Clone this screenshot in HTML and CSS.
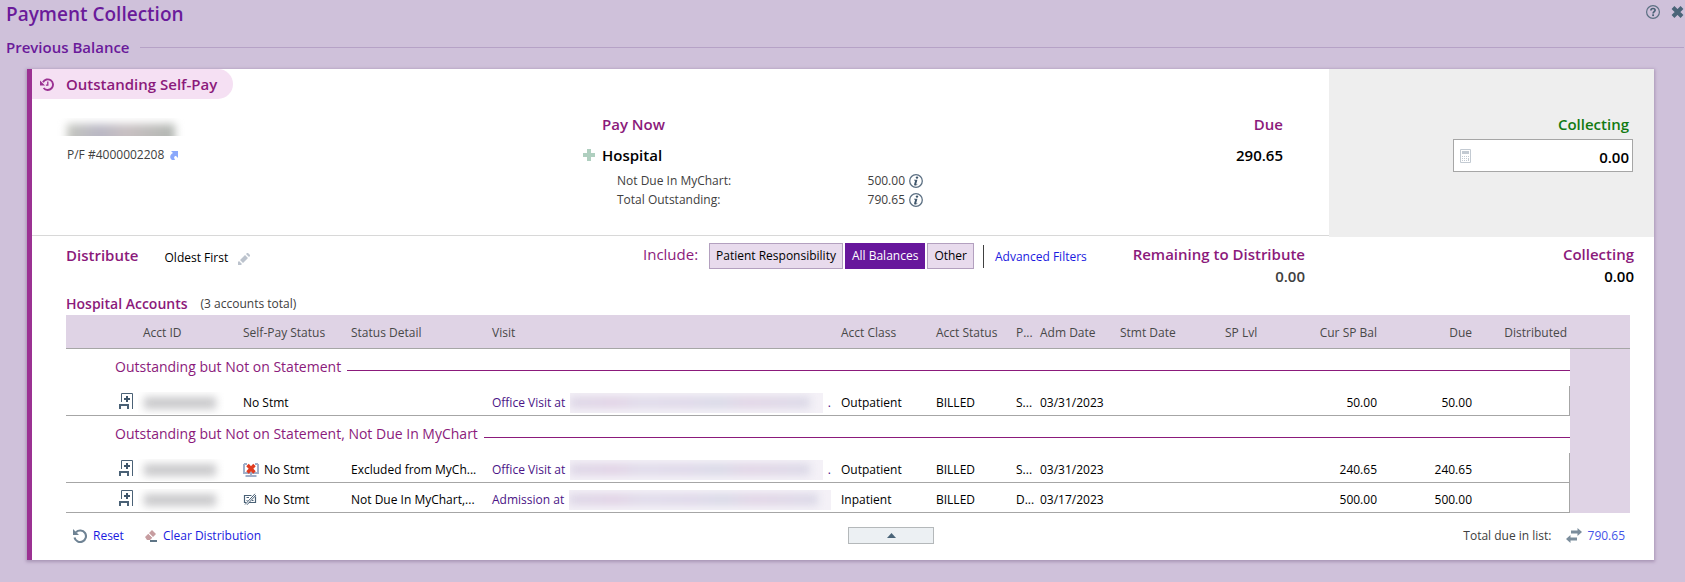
FILE: index.html
```html
<!DOCTYPE html>
<html lang="en">
<head>
<meta charset="utf-8">
<title>Payment Collection</title>
<link rel="stylesheet" href="styles.css">
</head>
<body>
<svg class="sprite" aria-hidden="true">
  <symbol id="info" viewBox="0 0 14 14"><circle cx="7" cy="7" r="6.3" fill="#fff" stroke="#5c7083" stroke-width="1.3"/><circle cx="8" cy="3.6" r="1.2" fill="#3f566b"/><path d="M5 5.8h3.4L7.2 10.2c0 .5.6.3 1.5-.4-.4 1.2-1.4 1.8-2.4 1.8-.9 0-1.4-.5-1.1-1.5L6.200 6.600H5z" fill="#3f566b"/></symbol>
  <symbol id="building" viewBox="0 0 14 16"><path d="M2.500 9V.5h11V16" fill="none" stroke="#4a6176"/><path d="M0 12h10M1 13v3M9 11v5" fill="none" stroke="#4a6176" stroke-width="2"/><path d="M5 6h6M8 3v6" stroke="#3f566b" stroke-width="2"/></symbol>
</svg>
<header class="titlebar">
  <h1>Payment Collection</h1>
  <div class="window-actions">
    <button type="button" aria-label="Help"><svg width="14" height="14" viewBox="0 0 14 14"><circle cx="7" cy="7" r="6.4" fill="none" stroke="#5c7083" stroke-width="1.2"/><path d="M4.900 5.600C4.900 2.800 9.200 2.900 9.100 5.200 9 6.600 7.100 6.700 7.100 8.500" fill="none" stroke="#4a6176" stroke-width="1.700"/><rect x="6.200" y="9.300" width="1.800" height="1.800" fill="#4a6176"/></svg></button>
    <button type="button" aria-label="Close"><svg width="13" height="12" viewBox="0 0 13 12"><path d="M2 1.500 11 10.500M11 1.500 2 10.500" stroke="#4a6478" stroke-width="4"/></svg></button>
  </div>
</header>
<h2 class="section-title">Previous Balance</h2>

<main class="card">
  <section class="summary">
    <div class="summary-main">
      <h3 class="pill"><svg width="14" height="13" viewBox="0 0 14 13"><path d="M3 4.200A5.300 5.300 0 1 1 3.600 10" fill="none" stroke="#9b3192" stroke-width="1.900"/><path d="M0 2.500v5h5z" fill="#9b3192"/><path d="M7.800 3.500v3.700H5.900" fill="none" stroke="#9b3192" stroke-width="1.300"/></svg>Outstanding Self-Pay</h3>
      <div class="summary-grid">
        <div class="patient">
          <div class="redacted redacted-name"></div>
          <p>P/F #4000002208 <svg width="8" height="9" viewBox="0 0 8 9"><path d="M1 0h7v7L6 5C4 5 3.500 6.500 5 9H2C-1 7 0 3.500 3 2z" fill="#8aa8fb"/></svg></p>
        </div>
        <div class="pay-now">
          <h4>Pay Now</h4>
          <div class="payer"><svg width="12" height="12" viewBox="0 0 12 12"><path d="M4 0h4v4h4v4H8v4H4V8H0V4h4z" fill="#afcfbf"/></svg>Hospital</div>
          <dl>
            <dt>Not Due In MyChart:</dt><dd>500.00 <svg width="14" height="14"><use href="#info"/></svg></dd>
            <dt>Total Outstanding:</dt><dd>790.65 <svg width="14" height="14"><use href="#info"/></svg></dd>
          </dl>
        </div>
        <div class="due"><h4>Due</h4><div class="payer">290.65</div></div>
      </div>
    </div>
    <div class="summary-side">
      <label for="collecting">Collecting</label>
      <div class="amount-box">
        <svg width="11" height="14" viewBox="0 0 11 14"><path d="M.5.5h10v13H.5z" fill="#fff" stroke="#c3cad2"/><path d="M2 2h7v3H2z" fill="#c3cad2"/><path d="M2 7.500h5M2 9.500h5M2 11.500h5" stroke="#c3cad2" stroke-dasharray="1 1"/><path d="M8.500 7v1M8.500 9v3" stroke="#c3cad2"/></svg>
        <input id="collecting" type="text" value="0.00">
      </div>
    </div>
  </section>

  <section class="distribute">
    <div class="method"><h4>Distribute</h4><span>Oldest First</span>
      <button type="button" aria-label="Edit distribution"><svg width="12" height="12" viewBox="0 0 12 12"><path d="M0 12V9l1-1 3 3-1 1zM2 7 7 2l3 3-5 5zM8 1l1-1h1l2 2v1l-1 1z" fill="#bcc3cd"/></svg></button>
    </div>
    <div class="include">
      <span class="include-label">Include:</span>
      <div class="segments"><button type="button">Patient Responsibility</button><button type="button" class="active">All Balances</button><button type="button">Other</button></div>
      <a href="#filters">Advanced Filters</a>
    </div>
    <div class="figure remaining"><h4>Remaining to Distribute</h4><span>0.00</span></div>
    <div class="figure"><h4>Collecting</h4><span>0.00</span></div>
  </section>

  <section class="accounts">
    <div class="accounts-title"><h4>Hospital Accounts</h4><span>(3 accounts total)</span></div>
    <table>
      <colgroup><col class="w74"><col class="w100"><col class="w108"><col class="w141"><col><col class="w95"><col class="w80"><col class="w24"><col class="w80"><col class="w105"><col class="w58"><col class="w100"><col class="w95"><col class="w95"><col class="w60"></colgroup>
      <thead><tr><th></th><th>Acct ID</th><th>Self-Pay Status</th><th>Status Detail</th><th>Visit</th><th>Acct Class</th><th>Acct Status</th><th>P...</th><th>Adm Date</th><th>Stmt Date</th><th>SP Lvl</th><th class="num">Cur SP Bal</th><th class="num">Due</th><th class="num">Distributed</th><th></th></tr></thead>
      <tbody>
        <tr class="group"><td colspan="14"><div>Outstanding but Not on Statement</div></td><td class="gutter"></td></tr>
        <tr><td class="type"><svg width="14" height="16"><use href="#building"/></svg></td><td><div class="redacted redacted-id"></div></td><td>No Stmt</td><td></td><td><div class="visit"><a href="#visit1">Office Visit at</a><span class="redacted redacted-visit"></span>.</div></td><td>Outpatient</td><td>BILLED</td><td>S...</td><td>03/31/2023</td><td></td><td></td><td class="num">50.00</td><td class="num">50.00</td><td class="last"></td><td class="gutter"></td></tr>
        <tr class="group"><td colspan="14"><div>Outstanding but Not on Statement, Not Due In MyChart</div></td><td class="gutter"></td></tr>
        <tr><td class="type"><svg width="14" height="16"><use href="#building"/></svg></td><td><div class="redacted redacted-id"></div></td><td><div class="status"><svg width="16" height="14" viewBox="0 0 16 14"><path d="M1 1v9h14V1M1 1h3M15 1h-3" fill="none" stroke="#9fafc9" stroke-width="2"/><path d="M8 10v3M2.500 13h11" stroke="#9fafc9" stroke-width="2"/><path d="M4.500 2 11.500 9.500M11.500 2 4.500 9.500" stroke="#e03c20" stroke-width="3.400"/></svg>No Stmt</div></td><td>Excluded from MyCh...</td><td><div class="visit"><a href="#visit2">Office Visit at</a><span class="redacted redacted-visit"></span>.</div></td><td>Outpatient</td><td>BILLED</td><td>S...</td><td>03/31/2023</td><td></td><td></td><td class="num">240.65</td><td class="num">240.65</td><td class="last"></td><td class="gutter"></td></tr>
        <tr><td class="type"><svg width="14" height="16"><use href="#building"/></svg></td><td><div class="redacted redacted-id"></div></td><td><div class="status"><svg width="16" height="14" viewBox="0 0 16 14"><path d="M8.500 2.500h-7v7H3M6 9.500h6.500v-6" fill="none" stroke="#4a6176" stroke-width="1.200"/><path d="M2 11.500 12 .8M4 11.800 13 2" stroke="#4a6176"/><path d="M3.500 4.500h2.500M3.500 7.500h1M9 7.500h1.500" stroke="#4a6176"/></svg>No Stmt</div></td><td>Not Due In MyChart,...</td><td><div class="visit"><a href="#visit3">Admission at</a><span class="redacted redacted-visit"></span></div></td><td>Inpatient</td><td>BILLED</td><td>D...</td><td>03/17/2023</td><td></td><td></td><td class="num">500.00</td><td class="num">500.00</td><td class="last"></td><td class="gutter"></td></tr>
      </tbody>
    </table>
    <footer>
      <div class="actions">
        <a href="#reset"><svg width="14" height="14" viewBox="0 0 14 14"><path d="M3 3.200A5.800 5.800 0 1 1 1.500 8.500" fill="none" stroke="#6f8394" stroke-width="2.100"/><path d="M0 0v6h6z" fill="#6f8394"/></svg>Reset</a>
        <a href="#clear"><svg width="12" height="12" viewBox="0 0 12 12"><path d="M7 0l4 4-3 3-4-4zM3.300 3.700l4 4L5 10H2L0 7z" fill="#c79da0"/><path d="M3.500 3.500l4 4" stroke="#fff"/><path d="M5 11h7" stroke="#5f7586" stroke-width="2"/></svg>Clear Distribution</a>
      </div>
      <button type="button" class="collapse" aria-label="Collapse"><svg width="9" height="5" viewBox="0 0 9 5"><path d="M0 5 4.500 0 9 5z" fill="#4a6478"/></svg></button>
      <div class="total">Total due in list: <a href="#total"><svg width="16" height="15" viewBox="0 0 16 15"><path d="M5 2.500h6.500V0L16 4l-4.500 4V5.500H5zM11 9.500H4.500V7L0 11l4.500 4v-2.500H11z" fill="#7b8d9c"/></svg>790.65</a></div>
    </footer>
  </section>
</main>
</body>
</html>
```

FILE: styles.css
```css
* { box-sizing: border-box; }
body {
  margin: 0;
  min-height: 100vh;
  background: #cfc1da;
  color: #000;
  font: 12px/18px "Open Sans", "Noto Sans", sans-serif;
}
h1, h2, h3, h4, p, dl, dd { margin: 0; }
h4 { font-size: 15px; line-height: 22px; font-weight: 600; color: #8b1a7b; }
button { font: inherit; padding: 0; border: 0; background: none; }
a { color: #1a1ae0; text-decoration: none; }
svg { display: block; flex: none; }
.sprite { position: absolute; width: 0; height: 0; }

.titlebar { display: flex; justify-content: space-between; align-items: flex-start; padding: 0 1px 0 6px; }
h1 { font-size: 19px; line-height: 28px; font-weight: 600; color: #6a1a9a; }
.window-actions { display: flex; align-items: center; gap: 11px; padding-top: 5px; }
.section-title {
  display: flex; align-items: center; gap: 10px;
  padding: 6px 1px 0 6px;
  font-size: 15px; line-height: 26px; font-weight: 600; color: #6a1a9a;
}
.section-title::after { content: ""; flex: 1; height: 1px; background: #b6a2c6; }

.card {
  margin: 9px 31px 0 27px;
  background: #fff;
  border-left: 5px solid #9b3192;
  box-shadow: 0 1px 3px 1px #a996b6;
}
.summary { display: flex; min-height: 168px; }
.summary-main { flex: 1; margin-bottom: 1px; border-bottom: 1px solid #d8d8d8; }
.pill {
  display: inline-flex; align-items: center; gap: 12px;
  height: 30px; padding: 0 16px 0 8px;
  border-radius: 0 15px 15px 0;
  background: #f5e0f3; color: #8b1a7b;
  font-size: 15px; font-weight: 600; vertical-align: top;
}
.summary-grid { display: grid; grid-template-columns: 516px 1fr auto; padding: 14px 46px 0 35px; }
.patient { padding-top: 5px; }
.patient p { display: flex; gap: 6px; align-items: center; margin-top: 10px; color: #404040; }
.redacted { overflow: hidden; }
.redacted::before { content: ""; display: block; filter: blur(4px); }
.redacted-name { width: 130px; height: 18px; margin-left: -12px; }
.redacted-name::before { width: 108px; height: 22px; margin: 6px 0 0 12px; background: linear-gradient(90deg, #c4c6be, #b9b7c4 30%, #c8c0c2 55%, #b2b7b2); }
.redacted-id { width: 86px; height: 22px; margin-left: -5px; }
.redacted-id::before { width: 72px; height: 12px; margin: 5px 0 0 6px; background: #c8c8ca; }
.redacted-visit { flex: 1; height: 20px; background: #f4f1f7; }
.redacted-visit::before { width: 95%; height: 11px; margin-top: 4px; background: linear-gradient(90deg, #dcd6e6, #dfd0e4 18%, #dedae9 30%, #ddd6e8 48%, #d7d8e6 62%, #e0d3e5 74%, #d9d7e6); }

.payer { display: flex; align-items: center; gap: 7px; margin-top: 9px; font-size: 15px; line-height: 22px; font-weight: 600; }
.pay-now h4 { padding-left: 19px; }
dl { display: grid; grid-template-columns: 220px 86px; padding: 5px 0 0 34px; line-height: 19px; color: #404040; }
dd { display: flex; justify-content: flex-end; align-items: center; gap: 4px; }
.due { text-align: right; }
.due .payer { justify-content: flex-end; }

.summary-side { width: 325px; background: #eee; padding: 44px 21px 0 0; display: flex; flex-direction: column; align-items: flex-end; }
.summary-side label { padding-right: 4px; font-size: 15px; line-height: 22px; font-weight: 600; color: #127a12; }
.amount-box { display: flex; align-items: center; width: 180px; height: 33px; margin-top: 4px; padding: 0 3px 0 6px; border: 1px solid #a6a6a6; background: #fff; }
.amount-box input { flex: 1; min-width: 0; padding: 2px 0 0; border: 0; outline: 0; text-align: right; font: 600 15px/22px "Open Sans", "Noto Sans", sans-serif; background: none; }

.distribute { display: grid; grid-template-columns: 577px auto 1fr 329px; align-items: start; padding: 6px 20px 0 34px; }
.method { display: flex; gap: 10px; align-items: center; }
.method span { margin: 6px 0 0 16px; }
.method button { margin-top: 7px; }
.include { display: flex; align-items: flex-start; }
.include-label { width: 66px; font-size: 15px; line-height: 22px; color: #8b1a7b; }
.segments { display: flex; gap: 2px; }
.segments button { height: 26px; padding: 0 6px; border: 1px solid #b3a0bf; background: #e8dbed; }
.segments .active { border-color: #67179c; background: #67179c; color: #fff; font-weight: 500; }
.include a { margin: 2px 0 0 9px; padding-left: 11px; border-left: 1px solid #404040; line-height: 23px; }
.figure { text-align: right; }
.figure span { display: block; font-size: 15px; line-height: 22px; font-weight: 600; }
.remaining span { color: #404040; }

.accounts { padding: 6px 24px 14px 34px; }
.accounts-title { display: flex; align-items: center; gap: 13px; height: 22px; color: #404040; }
.accounts-title h4 { font-size: 14px; }
table { width: 100%; table-layout: fixed; border-collapse: separate; border-spacing: 0; }
.w24 { width: 24px; } .w58 { width: 58px; } .w60 { width: 60px; } .w74 { width: 74px; }
.w80 { width: 80px; } .w95 { width: 95px; } .w100 { width: 100px; } .w105 { width: 105px; }
.w108 { width: 108px; } .w141 { width: 141px; }
th { height: 34px; padding: 2px 3px 0; background: #dfd3e5; border-bottom: 1px solid #a6a6a6; color: #484848; font-weight: 400; text-align: left; white-space: nowrap; }
td { height: 30px; padding: 4px 3px 0; border-bottom: 1px solid #a6a6a6; white-space: nowrap; }
.num { text-align: right; }
.group td { height: 37px; padding: 0 0 2px 49px; border-bottom: 0; font-size: 14px; color: #8b1a7b; }
.group div { display: flex; align-items: center; gap: 6px; }
.group div::after { content: ""; flex: 1; height: 1px; margin-top: 8px; background: #8b1a7b; }
td.type { padding: 0 0 0 53px; }
.last { border-right: 1px solid #a6a6a6; }
td.gutter, .group td.gutter { padding: 0; border-bottom: 0; background: #dfd3e5; }
.status { display: flex; align-items: center; gap: 5px; }
.visit { display: flex; align-items: center; gap: 5px; color: #4a1486; padding-right: 4px; }
.visit a { color: #4a1486; }

footer { display: grid; grid-template-columns: 775fr 86px 691fr; align-items: center; padding: 12px 5px 0 7px; height: 33px; }
.actions, .total, footer a { display: flex; align-items: center; }
.actions { gap: 21px; }
footer a { gap: 6px; }
.collapse { width: 86px; height: 17px; display: flex; align-items: center; justify-content: center; border: 1px solid #b4b8ba; background: #ecf0f3; }
.total { justify-content: flex-end; gap: 14px; color: #404040; }
.total a { color: #4455e8; }
```
